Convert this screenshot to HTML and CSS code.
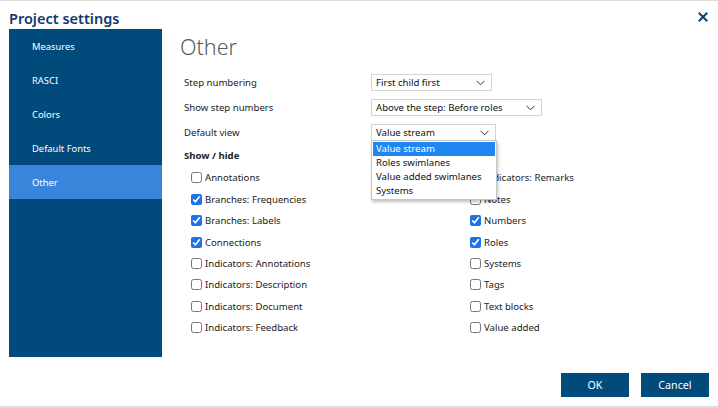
FILE: index.html
```html
<!DOCTYPE html>
<html>
<head>
<meta charset="utf-8">
<link rel="stylesheet" href="styles.css">
</head>
<body>
<div class="dialog">
  <header class="titlebar">
    <h1 class="title">Project settings</h1>
    <button class="close" aria-label="Close">
      <svg width="10" height="10" viewBox="0 0 10 10"><path d="M1.5 1.5 L8.5 8.5 M8.5 1.5 L1.5 8.5" stroke="#123e70" stroke-width="2" stroke-linecap="square"/></svg>
    </button>
  </header>
  <div class="body">
    <nav class="sidebar">
      <div class="nav-item">Measures</div>
      <div class="nav-item">RASCI</div>
      <div class="nav-item">Colors</div>
      <div class="nav-item">Default Fonts</div>
      <div class="nav-item active">Other</div>
    </nav>
    <main class="content">
      <h2 class="heading">Other</h2>
      <div class="form">
        <div class="row">
          <span class="label">Step numbering</span>
          <div class="select w1"><span>First child first</span><svg class="chev" width="9" height="6" viewBox="0 0 9 6"><path d="M0.5 0.8 L4.5 4.8 L8.5 0.8" fill="none" stroke="#333" stroke-width="1"/></svg></div>
        </div>
        <div class="row">
          <span class="label">Show step numbers</span>
          <div class="select w2"><span>Above the step: Before roles</span><svg class="chev" width="9" height="6" viewBox="0 0 9 6"><path d="M0.5 0.8 L4.5 4.8 L8.5 0.8" fill="none" stroke="#333" stroke-width="1"/></svg></div>
        </div>
        <div class="row">
          <span class="label">Default view</span>
          <div class="select-wrap">
            <div class="select w3"><span>Value stream</span><svg class="chev" width="9" height="6" viewBox="0 0 9 6"><path d="M0.5 0.8 L4.5 4.8 L8.5 0.8" fill="none" stroke="#333" stroke-width="1"/></svg></div>
            <ul class="popup">
              <li class="sel">Value stream</li>
              <li>Roles swimlanes</li>
              <li>Value added swimlanes</li>
              <li>Systems</li>
            </ul>
          </div>
        </div>
      </div>
      <div class="section-title">Show / hide</div>
      <div class="checks">
        <div class="col">
          <label class="check"><input type="checkbox"><span>Annotations</span></label>
          <label class="check"><input type="checkbox" checked><span>Branches: Frequencies</span></label>
          <label class="check"><input type="checkbox" checked><span>Branches: Labels</span></label>
          <label class="check"><input type="checkbox" checked><span>Connections</span></label>
          <label class="check"><input type="checkbox"><span>Indicators: Annotations</span></label>
          <label class="check"><input type="checkbox"><span>Indicators: Description</span></label>
          <label class="check"><input type="checkbox"><span>Indicators: Document</span></label>
          <label class="check"><input type="checkbox"><span>Indicators: Feedback</span></label>
        </div>
        <div class="col">
          <label class="check"><input type="checkbox"><span>Indicators: Remarks</span></label>
          <label class="check"><input type="checkbox"><span>Notes</span></label>
          <label class="check"><input type="checkbox" checked><span>Numbers</span></label>
          <label class="check"><input type="checkbox" checked><span>Roles</span></label>
          <label class="check"><input type="checkbox"><span>Systems</span></label>
          <label class="check"><input type="checkbox"><span>Tags</span></label>
          <label class="check"><input type="checkbox"><span>Text blocks</span></label>
          <label class="check"><input type="checkbox"><span>Value added</span></label>
        </div>
      </div>
    </main>
  </div>
  <footer class="footer">
    <button class="btn">OK</button>
    <button class="btn">Cancel</button>
  </footer>
</div>
</body>
</html>
```

FILE: styles.css
```css
* { box-sizing: border-box; }
html, body { margin: 0; padding: 0; background: #fff; }
body {
  font-family: "Noto Sans", "Open Sans", sans-serif;
  font-size: 9.6px;
  color: #222;
  width: 718px;
  height: 408px;
  overflow: hidden;
}
.dialog {
  height: 408px;
  border-top: 1px solid #dcdcdc;
  border-bottom: 2px solid #dcdcdc;
  display: flex;
  flex-direction: column;
}
.titlebar {
  height: 28px;
  flex-shrink: 0;
  display: flex;
  align-items: center;
  justify-content: space-between;
  padding: 0 10px 0 9px;
}
.title {
  margin: 0;
  font-size: 14.5px;
  font-weight: 600;
  color: #0f3a6c;
  line-height: 20px;
  padding-top: 6px;
}
.close {
  border: 0;
  background: none;
  padding: 0;
  width: 10px;
  height: 10px;
  display: flex;
  margin-top: 4px;
}
.body {
  display: flex;
  height: 328px;
  flex-shrink: 0;
}
.sidebar {
  width: 153px;
  flex-shrink: 0;
  margin-left: 9px;
  background: #004a7c;
  display: flex;
  flex-direction: column;
}
.nav-item {
  height: 34px;
  display: flex;
  align-items: center;
  padding-left: 23px;
  color: #fff;
  font-size: 9.4px;
}
.nav-item.active { background: #3a85dc; }
.content {
  flex: 1;
  padding-left: 18px;
  position: relative;
}
.heading {
  margin: 0;
  font-size: 21.5px;
  font-weight: 300;
  color: #5a5a5a;
  line-height: 30px;
  height: 41px;
  padding-top: 3px;
}
.form { padding-left: 4px; }
.row {
  display: flex;
  align-items: center;
  height: 25px;
}
.label { width: 187px; }
.select {
  height: 17px;
  border: 1px solid #d4d4d4;
  display: flex;
  align-items: center;
  justify-content: space-between;
  padding: 0 6px 0 4px;
  color: #111;
  background: #fff;
}
.w1 { width: 121px; }
.w2 { width: 171px; }
.w3 { width: 125px; }
.select-wrap { position: relative; }
.popup {
  position: absolute;
  left: 0;
  top: 16px;
  width: 126px;
  margin: 0;
  padding: 1px;
  list-style: none;
  background: #fff;
  border: 1px solid #c6c6c6;
  box-shadow: 1px 2px 3px rgba(0,0,0,0.25);
  z-index: 5;
  white-space: nowrap;
}
.popup li {
  height: 14px;
  line-height: 14px;
  padding-left: 3px;
  color: #111;
}
.popup li.sel { background: #1d86f0; color: #fff; }
.section-title {
  font-weight: 700;
  padding-left: 4px;
  height: 22px;
  line-height: 22px;
}
.checks {
  display: flex;
  padding-left: 11px;
}
.col {
  width: 279px;
  display: flex;
  flex-direction: column;
}
.check {
  height: 21.45px;
  display: flex;
  align-items: center;
  white-space: nowrap;
}
.check input {
  margin: 0 3px 0 0;
  width: 11px;
  height: 11px;
  accent-color: #1a73e8;
}
.footer {
  flex: 1;
  display: flex;
  justify-content: flex-end;
  align-items: flex-start;
  gap: 12px;
  padding: 16px 9px 0 0;
}
.btn {
  width: 68px;
  height: 24px;
  border: 0;
  background: #004a7c;
  color: #fff;
  font-family: "Noto Sans", "Open Sans", sans-serif;
  font-size: 10.7px;
  padding: 0;
}
```
